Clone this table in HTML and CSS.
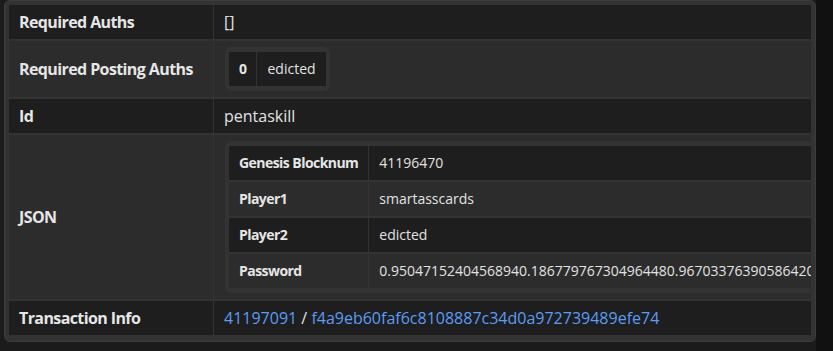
FILE: index.html
```html
<!DOCTYPE html>
<html>
<head>
    <title>Transaction</title>
    <link rel="stylesheet" href="styles.css">
</head>
<body>
    <div class="page">
        <div class="card">
            <table class="props">
                <tr>
                    <th>Required Auths</th>
                    <td>[]</td>
                </tr>
                <tr>
                    <th>Required Posting Auths</th>
                    <td>
                        <div class="nested">
                            <table class="props inner">
                                <tr>
                                    <th>0</th>
                                    <td>edicted</td>
                                </tr>
                            </table>
                        </div>
                    </td>
                </tr>
                <tr>
                    <th>Id</th>
                    <td>pentaskill</td>
                </tr>
                <tr>
                    <th>JSON</th>
                    <td>
                        <div class="nested">
                            <table class="props inner">
                                <tr>
                                    <th>Genesis Blocknum</th>
                                    <td>41196470</td>
                                </tr>
                                <tr>
                                    <th>Player1</th>
                                    <td>smartasscards</td>
                                </tr>
                                <tr>
                                    <th>Player2</th>
                                    <td>edicted</td>
                                </tr>
                                <tr>
                                    <th>Password</th>
                                    <td>0.95047152404568940.186779767304964480.96703376390586420.7451320398561544</td>
                                </tr>
                            </table>
                        </div>
                    </td>
                </tr>
                <tr>
                    <th>Transaction Info</th>
                    <td><a href="#">41197091</a> / <a href="#">f4a9eb60faf6c8108887c34d0a972739489efe74</a></td>
                </tr>
            </table>
        </div>
    </div>
</body>
</html>
```

FILE: styles.css
```css
body {
    margin: 0;
    background-color: #111;
    font-family: "Open Sans", "Noto Sans", sans-serif;
    color: #e2e2e2;
}
.page {
    width: 816px;
    height: 351px;
    box-sizing: border-box;
    padding-left: 4px;
    background-color: #1b1b1b;
}
.card {
    background: #333;
    border: 1px solid #3d3d3d;
    border-radius: 6px;
    padding: 2px 3px 4px 3px;
}
.props {
    width: 100%;
    table-layout: fixed;
    border-spacing: 1px 2px;
    font-size: 16px;
}
.props th,
.props td {
    padding: 6px 10px;
    line-height: 22px;
    text-align: left;
    white-space: nowrap;
}
.props th {
    width: 184px;
    font-weight: bold;
    letter-spacing: -0.6px;
    color: #e6e6e6;
    vertical-align: middle;
}
.props td {
    overflow: hidden;
    vertical-align: top;
}
.props tr:nth-child(odd) > * {
    background-color: #1e1e1e;
}
.props tr:nth-child(even) > * {
    background-color: #2c2c2c;
}
.nested {
    display: inline-block;
    vertical-align: top;
    margin-left: 1px;
    background: #333;
    border-radius: 6px;
    padding: 3px;
}
.inner {
    width: auto;
    table-layout: auto;
    font-size: 14px;
}
.inner th {
    width: 1px;
    letter-spacing: -0.55px;
}
.inner td {
    overflow: visible;
}
a {
    color: #5b9cf5;
    text-decoration: none;
}
```
